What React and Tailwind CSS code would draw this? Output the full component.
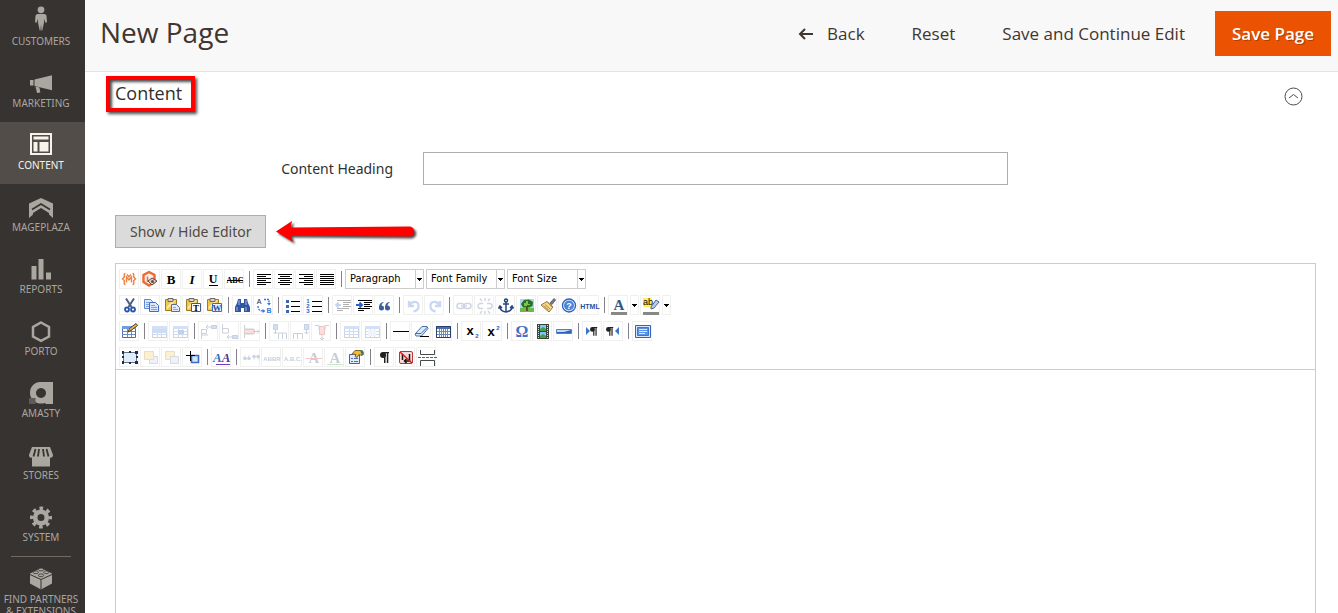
import React, { useState } from 'react';

const MENU = [
    { id: 'customers', label: 'CUSTOMERS' },
    { id: 'marketing', label: 'MARKETING' },
    { id: 'content', label: 'CONTENT', active: true },
    { id: 'mageplaza', label: 'MAGEPLAZA' },
    { id: 'reports', label: 'REPORTS' },
    { id: 'porto', label: 'PORTO' },
    { id: 'amasty', label: 'AMASTY' },
    { id: 'stores', label: 'STORES' },
    { id: 'system', label: 'SYSTEM' },
    { id: 'partners', label: 'FIND PARTNERS & EXTENSIONS', divider: true }
];

const MENU_ICONS = {
    customers: (
        <>
            <circle cx="13" cy="2.8" r="3.4" />
            <path d="M9 7h8l1.5 1.5.5 6.5-1.5 1-1-4-.6 4-1.6 7.5h-.8L13 17l-.5 6.500h-.8L10.100 16l-.6-4-1 4-1.500-1 .5-6.500z" />
        </>
    ),
    marketing: (
        <>
            <path d="M2 11h3.500v5.500H2zM6.500 10.500 24 6.200v15L6.500 17z" />
            <path d="M7.500 17.500 11.500 18.500l.8 5-3.300.6z" />
        </>
    ),
    content: (
        <>
            <path fillRule="evenodd" d="M2 2h22v22H2zM4 4v18h18V4z" />
            <path d="M5.500 5.500h15v3h-15zM5.500 11h4v9.500h-4zM11.500 11h9v9.500h-9z" />
        </>
    ),
    mageplaza: (
        <>
            <path d="M13 5 25 10.500V25l-4-3.500V20l-8-5-8 5v1.500L1 25V10.500z" />
            <path d="M4 16.500 13 11l9 5.500" fill="none" stroke="#373330" strokeWidth="1.600" />
        </>
    ),
    reports: <path d="M3.500 11h5v13.500h-5zM10.500 4h5v20.500h-5zM18 17.500h5v7h-5z" />,
    porto: <path d="M13 5.500 21 10v9.500L13 23.800 5 19.500V10z" fill="none" stroke="currentColor" strokeWidth="2.500" />,
    amasty: (
        <>
            <path
                fillRule="evenodd"
                d="M12 3h13v22H18l-1-1c-8 2.500-15-3-15-10S7 3 12 3zM13 9a5 5 0 1 0 .01 0z"
            />
            <path d="M1 19h6.500v6H1z" fill="#5b5b5b" />
        </>
    ),
    stores: (
        <>
            <path d="M4 6h18l3 8c0 2.500-2 3-3 2.500v9H4v-9c-1.500.5-3 0-3-2.500z" />
            <path
                d="M7.500 8 5.500 15.500M11 8l-1 7.500M15 8l1 7.500M18.500 8l2 7.500"
                fill="none"
                stroke="#373330"
                strokeWidth="1.800"
            />
        </>
    ),
    system: (
        <>
            <circle cx="13" cy="14.500" r="5.800" fill="none" stroke="currentColor" strokeWidth="4.600" />
            <circle
                cx="13"
                cy="14.500"
                r="9.200"
                fill="none"
                stroke="currentColor"
                strokeWidth="3.600"
                strokeDasharray="3.6 3.625"
                strokeDashoffset="1.8"
            />
        </>
    ),
    partners: (
        <>
            <path d="M13 3 24 8.500v10L13 24.500 2 18.500v-10z" />
            <path d="M2 9.500 13 14.500 24 9.500M13 14.500v10" fill="none" stroke="#373330" strokeWidth="1" />
            <g fill="#aaa6a0" stroke="#373330" strokeWidth="0.8">
                <ellipse cx="13" cy="4.500" rx="2.600" ry="1.400" />
                <ellipse cx="7.800" cy="7.300" rx="2.600" ry="1.400" />
                <ellipse cx="18.200" cy="7.300" rx="2.600" ry="1.400" />
                <ellipse cx="13" cy="10.300" rx="2.600" ry="1.400" />
            </g>
        </>
    )
};

const Lines = ({ rows, color = '#000' }) => (
    <g fill={color} shapeRendering="crispEdges">
        {rows.map(([x, y, w], i) => (
            <rect key={i} x={x} y={y} width={w} height="1" />
        ))}
    </g>
);

const Clipboard = ({ children }) => (
    <>
        <path d="M4.500 4.500h11v11h-11z" fill="#f0c850" stroke="#a57a1f" />
        <path d="M5.500 12 12 5.500h3L6 14.500z" fill="#fae9ab" />
        <path d="M7 3.500h5v3H7z" fill="#cfd3dc" stroke="#6d6a5c" />
        {children}
    </>
);

const Grid = ({ x = 4, y = 5, w = 14, h = 11 }) => (
    <>
        <path d={`M${x + 0.5} ${y + 0.5}h${w}v${h}h${-w}z`} fill="#fff" stroke="#4a6ea9" />
        <path d={`M${x} ${y}h${w + 1}v3h${-w - 1}z`} fill="#6f9be0" />
        <path
            d={`M${x} ${y + 5.5}h${w}M${x} ${y + 8.5}h${w}M${x + 5.5} ${y + 3}v${h - 3}M${x + 9.5} ${y + 3}v${h - 3}`}
            fill="none"
            stroke="#6c8cc4"
        />
    </>
);

const Letter = ({ children, x = 11, y = 15, size = 13, color = '#000', bold = true, italic = false, sans = false }) => (
    <text
        x={x}
        y={y}
        fontSize={size}
        fill={color}
        textAnchor="middle"
        fontWeight={bold ? 700 : 400}
        fontStyle={italic ? 'italic' : 'normal'}
        fontFamily={sans ? 'Liberation Sans, sans-serif' : 'Liberation Serif, serif'}
    >
        {children}
    </text>
);

const Pilcrow = ({ x = 11, y = 6, s = 1 }) => (
    <g transform={`translate(${x} ${y}) scale(${s})`} fill="#222">
        <circle cx="3" cy="3" r="3" />
        <path d="M3 0h6v1.300H3zM4 0h1.500v11H4zM6.800 0h1.500v11H6.800z" />
    </g>
);

const OUTDENT = [[5, 5, 14], [11, 7, 8], [11, 9, 6], [11, 11, 8], [5, 13, 12], [5, 15, 6]];

const ICONS = {
    variable: (
        <g fill="none" stroke="#f08040" strokeWidth="1.400">
            <path d="M6.500 4.500C4.500 4.500 5.500 6 5.300 8L3.500 10l1.800 1.500c.2 2.500-.8 4 1.200 4" />
            <path d="M13.500 4.500c2 0 1 1.500 1.200 3.500l1.800 2-1.800 1.500c-.2 2.500.8 4-1.200 4" />
            <path d="M7.500 13.500V8l2.500 3 2.500-3v5.500M8 5.500l2 2.500 2-2.500" />
        </g>
    ),
    widget: (
        <>
            <path d="M9 3 14.500 6v7L9 16.500 3.500 13V6z" fill="#fdeee6" stroke="#ee6a35" strokeWidth="2.400" />
            <path d="M7.500 7.500v5.500" stroke="#ee6a35" strokeWidth="1.500" />
            <path d="m8 12 4-3 5 3-5 4z" fill="#d8d0c8" stroke="#5a4a44" />
            <circle cx="12.500" cy="12.500" r="1.500" fill="#6c4a3c" />
        </>
    ),
    bold: <Letter x={10}>B</Letter>,
    italic: <Letter x={10} italic>I</Letter>,
    underline: (
        <>
            <Letter x={10} y={14} size={12}>U</Letter>
            <Lines rows={[[6, 16, 9]]} />
        </>
    ),
    strike: (
        <>
            <Letter y={14} size={8}>ABC</Letter>
            <Lines rows={[[3, 11, 16]]} />
        </>
    ),
    left: <Lines rows={[[4, 5, 14], [4, 7, 9], [4, 9, 14], [4, 11, 9], [4, 13, 14], [4, 15, 9]]} />,
    center: <Lines rows={[[4, 5, 14], [6, 7, 10], [4, 9, 14], [6, 11, 10], [4, 13, 14], [6, 15, 10]]} />,
    right: <Lines rows={[[4, 5, 14], [9, 7, 9], [4, 9, 14], [9, 11, 9], [4, 13, 14], [9, 15, 9]]} />,
    full: <Lines rows={[[4, 5, 14], [4, 7, 14], [4, 9, 14], [4, 11, 14], [4, 13, 14], [4, 15, 14]]} />,
    cut: (
        <>
            <path d="M7 3.500 12.500 12M15 3.500 9.500 12" fill="none" stroke="#4b5f80" strokeWidth="2" />
            <circle cx="8" cy="14.500" r="2" fill="none" stroke="#2b56b0" strokeWidth="1.800" />
            <circle cx="14" cy="14.500" r="2" fill="none" stroke="#2b56b0" strokeWidth="1.800" />
        </>
    ),
    copy: (
        <>
            <path d="M4.500 4.500h6l2 2v7h-8z" fill="#dbe8fd" stroke="#5b86d0" />
            <path d="M9.500 7.500h6l3 3v6h-9z" fill="#dbe8fd" stroke="#3f6bc0" />
            <path d="M6 7.500h3M6 9.500h3M6 11.500h3M11 10.500h4M11 12.500h6M11 14.500h6" stroke="#7ba0df" />
        </>
    ),
    paste: (
        <Clipboard>
            <path d="M10.500 9.500h5l3 3v4h-8z" fill="#e3ecfb" stroke="#5a6f96" />
            <path d="M12 12.500h3M12 14.500h5" stroke="#8aa4d4" />
        </Clipboard>
    ),
    pastetext: (
        <Clipboard>
            <path d="M9.500 8.500h9v8h-9z" fill="#fff" stroke="#445a80" />
            <Letter x={14} y={16} size={9}>T</Letter>
        </Clipboard>
    ),
    pasteword: (
        <Clipboard>
            <path d="M9.500 8.500h9v8h-9z" fill="#eaf1ff" stroke="#3f6bc0" />
            <Letter x={14} y={16} size={9} color="#2450b0">W</Letter>
        </Clipboard>
    ),
    search: (
        <>
            <path d="M6 4h3v4h3V4h3l1 4 2 4v5h-6v-4H9v4H3v-5l2-4z" fill="#2f569f" />
            <path d="M7 5v5M14 5v5M5 12v4M14 12v4" stroke="#9dbcf0" />
        </>
    ),
    replace: (
        <>
            <Letter x={6} y={9} size={7} sans bold={false} color="#222">A</Letter>
            <Letter x={16} y={18} size={7} sans color="#3b72e0">B</Letter>
            <path d="M11 4.500h5v4M5 11c0 4 2 5 6 5" fill="none" stroke="#3b72e0" strokeWidth="1.300" strokeDasharray="2 1" />
            <path d="m14 8 2 2.500L18 8M9.500 14l3 2-3 2z" fill="#3b72e0" />
        </>
    ),
    bullist: (
        <>
            <Lines rows={[[9, 6, 9], [9, 11, 9], [9, 16, 9]]} />
            <path d="M4 5h3v3H4zM4 10h3v3H4zM4 15h3v3H4z" fill="#3c66b4" />
        </>
    ),
    numlist: (
        <>
            <Lines rows={[[9, 6, 10], [9, 11, 10], [9, 16, 10]]} />
            <Letter x={5} y={8} size={6} sans color="#2c5fc4">1</Letter>
            <Letter x={5} y={13} size={6} sans color="#2c5fc4">2</Letter>
            <Letter x={5} y={18} size={6} sans color="#2c5fc4">3</Letter>
        </>
    ),
    outdent: (
        <>
            <Lines rows={OUTDENT} />
            <path d="M9 10H4M6.500 7.500 4 10l2.500 2.500" fill="none" stroke="#3c78e0" strokeWidth="1.800" />
        </>
    ),
    indent: (
        <>
            <Lines rows={OUTDENT} />
            <path d="M11 7h8v1h-8zM11 9h6v1h-6z" />
            <path d="M3 10h6M6.500 7.500 9 10l-2.500 2.500" fill="none" stroke="#2c62cc" strokeWidth="2" />
        </>
    ),
    quote: (
        <g fill="#3a5f9f">
            <circle cx="7.500" cy="13" r="2.500" />
            <circle cx="13.500" cy="13" r="2.500" />
            <path d="M5 13c0-4 2-6 5-6-2 1.500-2.500 2.500-2.500 4zM11 13c0-4 2-6 5-6-2 1.500-2.500 2.500-2.500 4z" />
        </g>
    ),
    undo: <path d="M6 6v5h5M6.500 10.500C9 5 16 6 15.500 11c0 3-2 5-5 5.500" fill="none" stroke="#4b7fdc" strokeWidth="2.300" />,
    redo: <path d="M16 6v5h-5M15.500 10.500C13 5 6 6 6.500 11c0 3 2 5 5 5.500" fill="none" stroke="#4b7fdc" strokeWidth="2.300" />,
    link: (
        <g fill="none" stroke="#63779c" strokeWidth="1.500">
            <rect x="4" y="8.500" width="7" height="5" rx="2.500" />
            <rect x="11" y="8.500" width="7" height="5" rx="2.500" />
            <path d="M8 11h6" />
        </g>
    ),
    unlink: (
        <g fill="none" stroke="#63779c" strokeWidth="1.400">
            <path d="M9 8.500H6.500a2.500 2.500 0 0 0 0 5H9M13 8.500h2.500a2.500 2.500 0 0 1 0 5H13" />
            <path d="m8 6-2-2.500M11 6V3M14 6l2-2.500M8 16l-2 2.500M11 16v3M14 16l2 2.500" />
        </g>
    ),
    anchor: (
        <g fill="none" stroke="#27477f" strokeWidth="1.500">
            <circle cx="11" cy="5.500" r="1.500" />
            <path d="M11 7v10M8 9h6M5 11.500c0 3 2.500 5 6 5.500 3.500-.5 6-2.500 6-5.500M3.500 13.500l1.500-2.500 2 2M18.500 13.500 17 11l-2 2" />
        </g>
    ),
    image: (
        <>
            <path d="M4 4h14v13H4z" fill="#acd2fa" />
            <path d="M4 13h14v4H4z" fill="#6cb84a" />
            <path d="M10 11h2v5h-2z" fill="#724a1c" />
            <path d="M5 9l3-4 5-.5 4 2.500-.5 4-3 1.500H7z" fill="#257021" />
            <path d="M8 8h2V6h2v3h2v1h-3v1H8z" fill="#7fc54e" />
        </>
    ),
    cleanup: (
        <>
            <path d="m13 8 4-4.500 1.500 1.500L15 9.500z" fill="#7a7f96" stroke="#5a5f70" />
            <path d="m10 6.500 6 5.500-4 5-8-7z" fill="#f4d98c" stroke="#97773a" />
            <path d="m10 7 5 5M6.500 10.500l5 4.500M8 9.500l5 4.500" stroke="#b8903c" />
        </>
    ),
    help: (
        <>
            <circle cx="11" cy="10.500" r="6.500" fill="#fff" stroke="#3163bd" strokeWidth="1.400" />
            <circle cx="11" cy="10.500" r="5" fill="#4e83dc" />
            <Letter y={14} size={9} sans color="#fff">?</Letter>
        </>
    ),
    html: <Letter y={14} size={7} sans color="#23509b">HTML</Letter>,
    forecolor: (
        <>
            <Letter y={15} size={15} color="#31578f">A</Letter>
            <path d="M3 17h16v3H3z" fill="#888" />
        </>
    ),
    backcolor: (
        <>
            <path d="M3 3h9v9H3z" fill="#ffef58" />
            <Letter x={8} y={10} size={9} sans bold={false}>ab</Letter>
            <path d="m11 12 5-7 3 2-5 6-3 1z" fill="#bccce8" stroke="#476398" />
            <path d="M3 17h16v3H3z" fill="#888" />
        </>
    ),
    table: (
        <>
            <Grid x={3} y={5} w={13} h={11} />
            <path d="m9 11 1.500-3.500L17 2.500l1.500 2L12 9.500z" fill="#ebb550" stroke="#523e27" />
        </>
    ),
    rowprops: (
        <>
            <Grid />
            <path d="M4 8h15v4H4z" fill="#608cdb" />
        </>
    ),
    cellprops: (
        <>
            <Grid />
            <path d="M9 9h6v4H9z" fill="#3469c7" />
        </>
    ),
    rowbefore: (
        <>
            <path d="M13.500 4.500h5v3h-5z" fill="#6b9be8" stroke="#42659d" />
            <path d="M13 6H8m2-2L8 6l2 2M3.500 18V8.500h5M3.500 12.500h5v-4M3.500 17.500V14H10" fill="none" stroke="#526786" />
        </>
    ),
    rowafter: (
        <>
            <path d="M13.500 14.500h5v3h-5z" fill="#6b9be8" stroke="#42659d" />
            <path d="M13 16H8m2-2-2 2 2 2M3.500 3v9h6V8M3.500 7.500h6" fill="none" stroke="#526786" />
        </>
    ),
    deleterow: (
        <>
            <path d="M4.500 4v4h9M4.500 17v-4h9" fill="none" stroke="#526786" />
            <path d="M4.500 8.500h10v4h-10z" fill="#ee9c9c" stroke="#c44242" />
            <path d="M13 10.500h6m-2-2 2 2-2 2" fill="none" stroke="#705757" />
        </>
    ),
    colbefore: (
        <>
            <path d="M4.500 3.500h4v5h-4z" fill="#6b9be8" stroke="#42659d" />
            <path d="M6.500 9v4m-2-2 2 2 2-2M9.500 18v-6h8v6M13.500 12v6" fill="none" stroke="#526786" />
        </>
    ),
    colafter: (
        <>
            <path d="M14.500 3.500h4v5h-4z" fill="#6b9be8" stroke="#42659d" />
            <path d="M16.500 9v4m-2-2 2 2 2-2M3.500 18v-5.500h9V18M7.500 12v6" fill="none" stroke="#526786" />
        </>
    ),
    deletecol: (
        <>
            <path d="M4 4.500h4V9M18 4.500h-4V9" fill="none" stroke="#526786" />
            <path d="M8.500 5.500h5v8h-5z" fill="#ee9c9c" stroke="#c44242" />
            <path d="M11 14v5m-2-2 2 2 2-2" fill="none" stroke="#705757" />
        </>
    ),
    split: (
        <>
            <path d="M4 5h15v12H4z" fill="#a9c2ea" />
            <Grid />
        </>
    ),
    merge: (
        <>
            <Grid />
            <path d="M7 9h8v6H7z" fill="#ccdcf5" />
        </>
    ),
    hr: <Lines rows={[[3, 10, 16]]} />,
    eraser: (
        <>
            <path d="m4 13 7-7.500h5l1 2L10.500 15H5z" fill="#dce9fb" stroke="#486ca4" />
            <path d="M4.500 12.500H10L16.500 6" fill="none" stroke="#486ca4" />
            <Lines rows={[[9, 15, 9]]} />
        </>
    ),
    visual: (
        <>
            <Grid />
            <path d="M4 5h15v3H4z" fill="#4a70ad" />
            <path d="M4 10.500h15M4 13.500h15M7.500 8v9M11.500 8v9M15.500 8v9" stroke="#6c88b8" />
            <path d="M4.500 5.500h14v11h-14z" fill="none" stroke="#29406f" />
        </>
    ),
    sub: (
        <>
            <Letter x={9} y={14} size={13} sans>x</Letter>
            <Letter x={16} y={17} size={6} sans color="#2c5fc4">2</Letter>
        </>
    ),
    sup: (
        <>
            <Letter x={9} y={15} size={13} sans>x</Letter>
            <Letter x={16} y={9} size={6} sans color="#2c5fc4">2</Letter>
        </>
    ),
    charmap: <Letter y={16} size={16} color="#3e70cc">Ω</Letter>,
    media: (
        <>
            <path d="M5 3h12v15H5z" fill="#3d423f" />
            <path d="M8 4h6v6H8zM8 11h6v6H8z" fill="#7fc7f2" />
            <path d="M8 8l3-2 3 2v2H8zM8 15l3-2 3 2v2H8z" fill="#43a143" />
            <path d="M6.500 4v14M15.500 4v14" stroke="#dbe0db" strokeDasharray="1 1" />
        </>
    ),
    advhr: (
        <>
            <path d="M3.500 8.500h15v4h-15z" fill="#c5dbfa" stroke="#5581c4" />
            <path d="M4 12h14V9l-7 2H4z" fill="#2b63bd" />
        </>
    ),
    ltr: (
        <>
            <path d="m4 6 4 4-4 4z" fill="#3974cf" />
            <Pilcrow x={8} y={6} s={0.8} />
        </>
    ),
    rtl: (
        <>
            <path d="m16 6-4 4 4 4z" fill="#3974cf" />
            <Pilcrow x={3} y={6} s={0.8} />
        </>
    ),
    fullscreen: (
        <>
            <path d="M3.500 4.500h15v12h-15z" fill="#dbe8fc" stroke="#3464b4" />
            <path d="M5.500 6.500h11v8h-11z" fill="#5b91e6" stroke="#3f74d0" />
            <path d="M7 8.500h8M7 10.500h8M7 12.500h6" stroke="#dce9ff" />
        </>
    ),
    layer: (
        <>
            <path d="M4.500 5.500h13v10h-13z" fill="#e1ecfb" stroke="#667386" />
            <path d="M3 4h2v3H3zM10 4h2v2h-2zM16 4h3v3h-3zM3 9h2v2H3zM17 9h2v2h-2zM3 14h2v3H3zM10 15h2v2h-2zM16 14h3v3h-3z" fill="#1b2d4c" />
        </>
    ),
    forward: (
        <>
            <path d="M9.500 9.500h8v7h-8z" fill="#cad5e9" stroke="#7488aa" />
            <path d="M4.500 4.500h9v8h-9z" fill="#f4d46b" stroke="#b79536" />
        </>
    ),
    backward: (
        <>
            <path d="M4.500 4.500h9v8h-9z" fill="#f4d46b" stroke="#b79536" />
            <path d="M9.500 9.500h8v7h-8z" fill="#cad5e9" stroke="#7488aa" />
        </>
    ),
    absolute: (
        <>
            <path d="M9.500 8.500h7v7h-7z" fill="#d5e4fc" stroke="#386bc5" strokeWidth="1.600" />
            <path d="M8 4h1v10H8zM4 8h9v1H4z" shapeRendering="crispEdges" />
        </>
    ),
    styleprops: (
        <>
            <text x="2" y="15" fontSize="13" fontWeight="700" fontStyle="italic" fontFamily="Liberation Serif, serif">
                <tspan fill="#346ac6">A</tspan>
                <tspan fill="#4c3792">A</tspan>
            </text>
            <path d="M5 17h14v1H5z" fill="#743bb6" />
        </>
    ),
    cite: (
        <g fill="#5275a8">
            <circle cx="5" cy="11.500" r="1.800" />
            <circle cx="9" cy="11.500" r="1.800" />
            <circle cx="14" cy="9.500" r="1.800" />
            <circle cx="18" cy="9.500" r="1.800" />
            <path d="M5.500 7 3.200 11.500h1.500zM9.500 7l-2.300 4.500h1.500zM13.500 14l2.300-4.500h-1.500zM17.500 14l2.300-4.500h-1.500z" />
        </g>
    ),
    abbr: <Letter y={14} size={6} sans color="#36598f">ABBR</Letter>,
    acronym: <Letter y={14} size={6} sans color="#36598f">A.B.C.</Letter>,
    del: (
        <>
            <Letter y={16} size={15} color="#455d82">A</Letter>
            <path d="M3 11h16v1H3z" fill="#e44747" />
        </>
    ),
    ins: (
        <>
            <Letter y={16} size={15} color="#455d82">A</Letter>
            <path d="M3 17h16v1H3z" fill="#45ad45" />
        </>
    ),
    attribs: (
        <>
            <path d="M4.500 7.500h10v9h-10z" fill="#e1eafc" stroke="#4264a0" />
            <path d="M6 11.500h2M9 11.500h4M6 14.500h2M9 14.500h4" stroke="#4572bc" />
            <path d="m7 7 3-3.500h6l2 2-1 3-3-1-2 3-2-1 1-2z" fill="#edba40" stroke="#846622" />
            <path d="m15 3 3 .5 1 4-2 1z" fill="#44735d" />
        </>
    ),
    visualchars: <Pilcrow x={6} y={5} />,
    nonbreaking: (
        <>
            <rect x="4.500" y="4.500" width="13" height="12" rx="1.500" fill="#f7d9d9" stroke="#b63535" />
            <path d="M7.500 7v6M14.500 7v7h-5m2-2-2 2 2 2" fill="none" stroke="#111" strokeWidth="1.500" />
            <path d="m5 5 12 11" stroke="#d91c1c" strokeWidth="1.500" />
        </>
    ),
    pagebreak: (
        <>
            <path d="M4.500 3v4.500h14V3M4.500 19v-5.500h14V19" fill="none" stroke="#414b48" />
            <path d="M2 10.500h19" stroke="#42678b" strokeDasharray="3 1" />
        </>
    )
};

// "|" is a separator, a leading "-" marks a disabled button, "@" a list box, "+" a split button
const TOOLBARS = [
    'variable widget bold italic underline strike | left center right full | @Paragraph @Font_Family @Font_Size',
    'cut copy paste pastetext pasteword | search replace | bullist numlist | -outdent indent quote | -undo -redo | -link -unlink anchor image cleanup help html | +forecolor +backcolor',
    'table | -rowprops -cellprops | -rowbefore -rowafter -deleterow | -colbefore -colafter -deletecol | -split -merge | hr eraser visual | sub sup | charmap media advhr | ltr rtl | fullscreen',
    'layer -forward -backward absolute | styleprops | -cite -abbr -acronym -del -ins attribs | visualchars nonbreaking pagebreak'
];

const ToolButton = ({ name, disabled = false }) => (
    <button
        type="button"
        aria-label={name}
        disabled={disabled}
        className="mr-px h-5 w-5 shrink-0 border border-[#f0f0ee] bg-white disabled:[&>svg]:opacity-30"
    >
        <svg viewBox="1 1 18 18" className="h-[18px] w-[18px] overflow-visible">
            {ICONS[name]}
        </svg>
    </button>
);

const Caret = () => (
    <svg viewBox="0 0 5 3" className="h-[3px] w-[5px] shrink-0" shapeRendering="crispEdges">
        <path d="M0 0h5v1H0zM1 1h3v1H1zM2 2h1v1H2z" />
    </svg>
);

const ListBox = ({ label }) => (
    <div className="relative mr-0.5 h-5 w-[79px] shrink-0 border border-[#ccc] bg-white">
        <select
            aria-label={label}
            className="block h-full w-full appearance-none bg-transparent pl-1 font-['DejaVu_Sans_Condensed','Noto_Sans',sans-serif] text-[11px] leading-[18px] text-black outline-none"
        >
            <option>{label}</option>
        </select>
        <span className="pointer-events-none absolute inset-y-0 right-0 flex w-2 items-center justify-center border-l border-[#ccc] bg-white">
            <Caret />
        </span>
    </div>
);

const ToolItem = ({ token }) => {
    if (token === '|') {
        return <span className="mr-[3px] ml-1 h-4 w-px shrink-0 bg-[#86808a]" />;
    }
    if (token[0] === '@') {
        return <ListBox label={token.slice(1).replace('_', ' ')} />;
    }
    if (token[0] === '+') {
        return (
            <span className="mr-px flex gap-px">
                <ToolButton name={token.slice(1)} />
                <button
                    type="button"
                    aria-label={`${token.slice(1)} menu`}
                    className="flex h-5 w-[9px] items-center justify-center border border-[#f0f0ee]"
                >
                    <Caret />
                </button>
            </span>
        );
    }
    if (token[0] === '-') {
        return <ToolButton name={token.slice(1)} disabled />;
    }
    return <ToolButton name={token} />;
};

const Sidebar = () => (
    <nav className="h-screen w-[85px] shrink-0 overflow-hidden bg-[#373330]">
        <ul className="-mt-0.5">
            {MENU.map((item) => (
                <li key={item.id} className="relative">
                    {item.divider && <span className="absolute top-0 right-3.5 left-[11px] h-px bg-[#736963]" />}
                    <a
                        href={`#${item.id}`}
                        className={
                            item.active
                                ? 'flex min-h-[62px] flex-col items-center gap-0.5 bg-[#524d49] pt-[9px] text-[#f7f3eb]'
                                : 'flex min-h-[62px] flex-col items-center gap-0.5 pt-[9px] text-[#aaa6a0]'
                        }
                    >
                        <svg viewBox="0 0 26 26" className="ml-[-3px] h-[26px] w-[26px] overflow-visible fill-current">
                            {MENU_ICONS[item.id]}
                        </svg>
                        <span className="w-[82px] self-start text-center font-['Noto_Sans',sans-serif] text-[10px] leading-3">
                            {item.label}
                        </span>
                    </a>
                </li>
            ))}
        </ul>
    </nav>
);

const PageHeader = () => (
    <header className="flex h-[72px] items-start justify-between border-b border-[#e3e3e3] bg-[#f8f8f8] pr-[7px] pl-[15px]">
        <h1 className="pt-[11px] text-[28px] leading-[42px] text-[#41362f]">New Page</h1>
        <div className="flex gap-[13px] pt-[11px] text-[17px] leading-[45px] font-medium text-[#41362f]">
            <button type="button" className="flex items-center gap-3.5 px-[17px]">
                <svg viewBox="0 0 15 12" className="h-3 w-[15px]" fill="none" stroke="currentColor" strokeWidth="2">
                    <path d="M15 6H2M7 1 2 6l5 5" />
                </svg>
                Back
            </button>
            <button type="button" className="px-[17px]">Reset</button>
            <button type="button" className="px-[17px]">Save and Continue Edit</button>
            <button
                type="button"
                className="bg-[#eb5202] px-[17px] font-semibold text-white [text-shadow:1px_1px_0_rgba(0,0,0,0.25)]"
            >
                Save Page
            </button>
        </div>
    </header>
);

const App = () => {
    const [open, setOpen] = useState(true);
    const [showEditor, setShowEditor] = useState(true);

    return (
        <div className="flex h-screen overflow-hidden bg-white font-['Open_Sans',sans-serif] text-[#303030]">
            <Sidebar />
            <div className="flex min-w-0 flex-1 flex-col">
                <PageHeader />
                <main className="flex flex-1 flex-col">
                    <div className="flex items-end justify-between pt-1 pr-[35px] pl-[21px]">
                        <h2 className="h-9 border-4 border-[#fe0000] pr-[9px] pl-[5px] text-lg leading-[26px] font-medium shadow-[2px_2px_3px_rgba(0,0,0,0.7),inset_2px_2px_3px_rgba(0,0,0,0.7)]">
                            Content
                        </h2>
                        <button type="button" aria-label="Toggle section" className="mb-1.5" onClick={() => setOpen(!open)}>
                            <svg viewBox="0 0 19 19" className="h-[19px] w-[19px]" fill="none" stroke="#514943">
                                <circle cx="9.5" cy="9.5" r="8.5" />
                                <path d="m5 11 4.500-3.500L14 11" />
                            </svg>
                        </button>
                    </div>
                    {open && (
                        <div className="flex flex-1 flex-col pt-10 pr-[22px] pl-[30px]">
                            <div className="grid grid-cols-[278fr_585fr_278fr] items-center gap-[30px]">
                                <label
                                    htmlFor="heading"
                                    className="text-right font-['Noto_Sans',sans-serif] text-sm"
                                >
                                    Content Heading
                                </label>
                                <input
                                    id="heading"
                                    type="text"
                                    className="h-[33px] w-full border border-[#adadad] bg-white px-2.5 text-sm outline-none"
                                />
                            </div>
                            <div className="mt-[30px] flex items-center gap-2.5">
                                <button
                                    type="button"
                                    onClick={() => setShowEditor(!showEditor)}
                                    className="h-[33px] border border-[#adadad] bg-[#dbdbdb] px-3.5 font-['Noto_Sans',sans-serif] text-sm text-[#514943]"
                                >
                                    Show / Hide Editor
                                </button>
                                <svg viewBox="0 0 140 26" className="h-[26px] w-[140px] overflow-visible drop-shadow-[2px_2px_1px_rgba(0,0,0,0.7)]">
                                    <path d="M0 12.500 16 2 14.500 8.500 133 7.500c7 0 7 10 0 10L14.500 16.500 17 23z" fill="#fe0000" />
                                </svg>
                            </div>
                            {showEditor && (
                                <div className="mt-[15px] flex flex-1 flex-col border border-b-0 border-[#ccc]">
                                    <div className="flex flex-col gap-1.5 border-b border-[#ccc] pt-[5px] pb-0.5 pl-[3px]">
                                        {TOOLBARS.map((row) => (
                                            <div key={row} className="flex h-5 items-center">
                                                {row.split(' ').map((token, i) => (
                                                    <ToolItem key={i} token={token} />
                                                ))}
                                            </div>
                                        ))}
                                    </div>
                                    <textarea aria-label="Page content" className="w-full flex-1 resize-none p-2 text-sm outline-none" />
                                </div>
                            )}
                        </div>
                    )}
                </main>
            </div>
        </div>
    );
};

export default App;
